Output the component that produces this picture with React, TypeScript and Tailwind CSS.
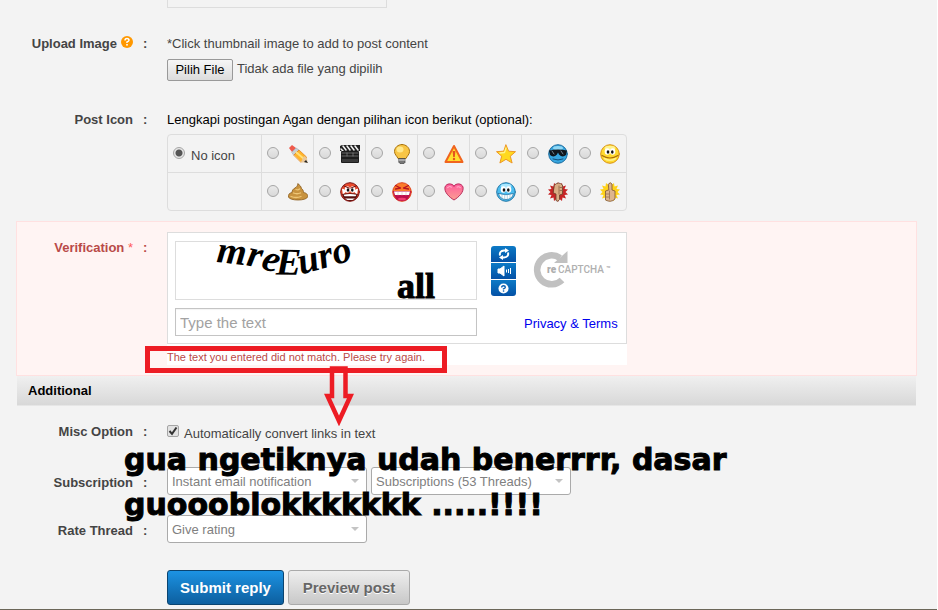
import { useRef, type ReactNode } from "react";

const outline = { strokeLinejoin: "round" as const, strokeLinecap: "round" as const };

function Svg({ children }: { children: ReactNode }) {
  return (
    <svg viewBox="0 0 20 20" className="size-5" aria-hidden="true" {...outline}>
      {children}
    </svg>
  );
}

const Pencil = () => (
  <Svg>
    <path d="M1 4 4 1 8 4 4 8Z" fill="#ef5a4c" />
    <path d="M4 8 8 4 11 6 6 11Z" fill="#c9ced3" stroke="#8d949b" strokeWidth=".5" />
    <path d="M6 11 11 6 18.500 13 18 17 13 18Z" fill="#ffb52b" stroke="#e07c12" strokeWidth=".7" />
    <path d="M8.500 8.500 16 15" stroke="#ffe07a" strokeWidth="2" />
    <path d="M13 18 16 12 19 14 19.500 19Z" fill="#e8c79a" />
    <path d="M16 18 18 16 20 19Z" fill="#222" />
  </Svg>
);
const Clapper = () => (
  <Svg>
    <path d="M0 2 2 1H20V7H0Z" fill="#222" />
    <path d="M3 2 6 6M7 2 10 6M11 2 14 6M15 2 18 6M1 5 3 7" stroke="#f2f2f2" strokeWidth="1.500" />
    <rect x="1" y="7" width="18" height="12" rx="1" fill="#1d1d1d" />
    <path d="M2 9H18M2 12H18M7 9V12M13 9V12" stroke="#999" strokeWidth=".6" />
    <path d="M2 15H18V18H2Z" fill="#3a3a3a" />
  </Svg>
);
const Bulb = () => (
  <Svg>
    <path d="M10 .5C6 .5 2.500 3.500 2.500 7.500c0 3 2.500 4.500 3.500 7h8c1-2.500 3.500-4 3.500-7C17.500 3.500 14 .5 10 .5Z" fill="#f8c545" stroke="#a9740f" />
    <ellipse cx="8" cy="5.500" rx="3.500" ry="3" fill="#ffe88c" />
    <path d="M7 14.500h6v4l-1 1H8l-1-1Z" fill="#777" stroke="#444" strokeWidth=".7" />
    <path d="M7 16h6" stroke="#ddd" />
  </Svg>
);
const Warning = () => (
  <Svg>
    <path d="M10 2 18.500 18H1.500Z" fill="#ffde2e" stroke="#f0641e" strokeWidth="2" />
    <path d="M8.600 7h2.800l-.6 6H9.200Z" fill="#e5521d" />
    <circle cx="10" cy="15" r="1.200" fill="#e5521d" />
  </Svg>
);
const Star = () => (
  <Svg>
    <path d="m10 1 2.600 6.200 6.900.5-5.200 4.500 1.800 6.800L10 15.300 3.900 19l1.800-6.800L.5 7.700l6.900-.5Z" fill="#ffd91f" stroke="#ed9726" />
    <path d="m10 4-1.500 4.500L4 9" stroke="#fff38c" strokeWidth="1.300" fill="none" />
  </Svg>
);
const Eyes = () => (
  <>
    <ellipse cx="7.300" cy="7.500" rx="2.600" ry="3.300" fill="#fff" />
    <ellipse cx="12.700" cy="7.500" rx="2.600" ry="3.300" fill="#fff" />
    <ellipse cx="8" cy="8" rx="1.300" ry="1.700" fill="#111" />
    <ellipse cx="12.300" cy="8" rx="1.300" ry="1.700" fill="#111" />
  </>
);
const Cool = () => (
  <Svg>
    <circle cx="10" cy="10" r="9.300" fill="#37a6df" stroke="#1b6a9d" />
    <ellipse cx="10" cy="4" rx="5" ry="2" fill="#8ed8f6" />
    <path d="M1 6.500Q10 4.500 19 6.500L18 11Q14.500 14 11 10.500L10 8.500 9 10.500Q5.500 14 2 11Z" fill="#10161c" />
    <path d="m4 7 2 3M13 7l2 3" stroke="#718390" />
    <path d="M5 15Q10 17 15 15" stroke="#134d78" fill="none" />
  </Svg>
);
const Smile = () => (
  <Svg>
    <circle cx="10" cy="10" r="9.300" fill="#ffd92e" stroke="#d99216" />
    <ellipse cx="10" cy="4" rx="5.500" ry="2.300" fill="#fff38f" />
    <Eyes />
    <path d="M2 11.500Q10 16.500 18 11.500" fill="none" stroke="#a96c0c" strokeWidth="1.200" />
    <path d="M4.500 14.500Q10 18 15.500 14.500" fill="none" stroke="#fff08a" strokeWidth="1.500" />
  </Svg>
);
const Poop = () => (
  <Svg>
    <path d="M10 2c2 1 3 2.500 3.500 4.500 1.500 1 2 2.500 2 4C19 11 20 13 19.500 15c-1 4-18 4-19 0-.5-2 .5-4 3.500-4.500 0-2 1-3.500 3-4.500C8.500 5 9.500 4 10 2Z" fill="#c8933f" stroke="#8a5c1c" strokeWidth=".8" />
    <path d="M8 7.500q2 1 3.500-.5M5.500 11q3.500 1.500 7 0M3 14.500q5 2 10 0" stroke="#efc777" strokeWidth="1.300" fill="none" />
  </Svg>
);
const Mad = () => (
  <Svg>
    <circle cx="10" cy="10" r="9.300" fill="#e84a2c" stroke="#7d1010" />
    <path d="M2 7q2-1 4 2.500L3 13ZM18 7q-2-1-4 2.500l3 3.500Z" fill="#fff" />
    <Eyes />
    <path d="m4 4 5 2M16 4l-5 2" stroke="#6b0c0c" />
    <path d="M2 12Q10 10.500 18 12 16 19 10 19 4 19 2 12Z" fill="#56100f" />
    <path d="M3.500 12.800q6.500-1.500 13 0l-1 1.400h-11ZM5 16.500h10l-2.500 1.500h-5Z" fill="#fff" />
  </Svg>
);
const Laugh = () => (
  <Svg>
    <circle cx="10" cy="10" r="9.300" fill="#fb7b29" stroke="#dd421e" />
    <path d="m3.500 3.500 5 2.500-5 1M16.500 3.500l-5 2.500 5 1" stroke="#b71320" strokeWidth="1.300" fill="none" />
    <path d="M1 9h18q-1 10-9 10T1 9Z" fill="#bd0e4d" />
    <path d="M2 9.500h16l-1 3.500H3Z" fill="#fff" />
    <path d="M6 10v3M10 10v3M14 10v3" stroke="#d9b9bf" strokeWidth=".6" />
    <ellipse cx="10" cy="17" rx="4" ry="1.300" fill="#ef3f72" />
  </Svg>
);
const Heart = () => (
  <Svg>
    <defs>
      <linearGradient id="heart" x2="0" y2="1">
        <stop stopColor="#ff5c9d" />
        <stop offset="1" stopColor="#fa9f91" />
      </linearGradient>
    </defs>
    <path d="M10 4C8 1 2.500 1 1 5c-1 5 4 10 9 13C15 15 20 10 19 5c-1.500-4-7-4-9-1Z" fill="url(#heart)" stroke="#b92d5c" />
    <path d="M3.500 5.500q2-2 4-.5M13 5q2-1 3.500.5" stroke="#ffb5cf" fill="none" />
  </Svg>
);
const Grin = () => (
  <Svg>
    <circle cx="10" cy="10" r="9.300" fill="#4bbdf0" stroke="#2376a5" />
    <ellipse cx="10" cy="4" rx="5.500" ry="2.300" fill="#a9e7ff" />
    <Eyes />
    <path d="M2.500 11.500Q10 14 17.500 11.500 16 17.500 10 17.500 4 17.500 2.500 11.500Z" fill="#fff" stroke="#226b99" strokeWidth=".7" />
    <path d="M6 13v3.500M8.700 13v4M11.300 13v4M14 13v3.500" stroke="#7db7d2" strokeWidth=".6" />
  </Svg>
);
const burst =
  "m10 0 1.500 3L14 1l.5 3.500L18 3.500 16.500 7l3.500.5L17.500 10l2.500 2.500-3.500.5 1.500 3.500-3.500-1L14 19l-2.500-2L10 20l-1.500-3L6 19l-.5-3.500-3.500 1L3.500 13 0 12.500 2.500 10 0 7.500 3.500 7 2 3.500l3.500 1L6 1l2.500 2Z";
const ThumbDown = () => (
  <Svg>
    <path d={burst} fill="#c62526" />
    <path d="M6.500 3q4-4 8 0v9l-3 1v4.500q-1.500 3-3.500 1V12L5.500 11Z" fill="#d9ae85" stroke="#6b432c" strokeWidth=".8" />
    <path d="M11 4v8M12 5.500h2.500M12 8.500h2.500" stroke="#8d6245" strokeWidth=".8" />
  </Svg>
);
const ThumbUp = () => (
  <Svg>
    <path d={burst} fill="#ffd21b" />
    <path d="M8.500 2q2-2.500 3.500 0v6l3 1v8q-4 4-9.500 1V9l3-1Z" fill="#ddb58e" stroke="#7c5436" strokeWidth=".8" />
    <path d="M9.500 9v8M6 12h3M6 15h3" stroke="#9a7150" strokeWidth=".8" />
  </Svg>
);

const rows = [
  [
    ["Pencil", Pencil],
    ["Movie", Clapper],
    ["Idea", Bulb],
    ["Warning", Warning],
    ["Star", Star],
    ["Cool", Cool],
    ["Smile", Smile],
  ],
  [
    ["Poop", Poop],
    ["Mad", Mad],
    ["Laugh", Laugh],
    ["Heart", Heart],
    ["Grin", Grin],
    ["Thumbs down", ThumbDown],
    ["Thumbs up", ThumbUp],
  ],
] as const;

const radio =
  "mb-0.5 size-3 shrink-0 appearance-none rounded-full border border-[#a5a5a5] bg-linear-to-b from-[#e9e9e9] to-[#d9d9d9] checked:bg-[radial-gradient(circle,#555_0_3px,#e6e6e6_4px)]";

function Row({ label, htmlFor, className = "items-start", children }: { label: ReactNode; htmlFor?: string; className?: string; children: ReactNode }) {
  return (
    <div className={`flex ${className}`}>
      <label htmlFor={htmlFor} className="w-[117px] shrink-0 text-right font-bold">
        {label}
      </label>
      <span className="w-[34px] shrink-0 pl-2.5 font-bold">:</span>
      <div className="min-w-0 flex-1">{children}</div>
    </div>
  );
}

function Select({ id, label, text }: { id: string; label: string; text: string }) {
  return (
    <div className="relative w-[200px]">
      <select id={id} aria-label={label} className="block h-7 w-full appearance-none rounded-[3px] border border-[#aaa] bg-white px-1 pt-px text-[#808080]">
        <option>{text}</option>
      </select>
      <svg viewBox="0 0 8 4" className="pointer-events-none absolute top-3 right-2 h-1 w-2" aria-hidden="true">
        <path d="M0 0H8L4 4Z" fill="#c4c4c4" />
      </svg>
    </div>
  );
}

const tool = "flex h-4 w-full items-center justify-center bg-linear-to-b from-[#0d7ac6] to-[#0551a6]";

export default function App() {
  const file = useRef<HTMLInputElement>(null);
  return (
    <div className="relative min-h-screen overflow-hidden border-r border-white bg-[#f3f3f3] font-['Liberation_Sans',Arial,sans-serif] text-[13px] leading-5 text-[#444]">
      <form className="mr-5 ml-4" onSubmit={(e) => e.preventDefault()}>
        <div className="ml-[151px] h-2 w-[220px] border border-t-0 border-[#ddd]" />

        <Row
          className="mt-[26px] items-start"
          htmlFor="upload"
          label={
            <span className="flex justify-end gap-1">
              Upload Image
              <svg viewBox="0 0 12 12" className="mt-[2px] size-3" aria-hidden="true">
                <circle cx="6" cy="6" r="6" fill="#ff9800" />
                <path d="M4 4.500Q4 2.500 6 2.500T8 4.300Q8 5.300 6 6V7" fill="none" stroke="#fff" strokeWidth="1.500" />
                <rect x="5.200" y="8" width="1.600" height="1.600" fill="#fff" />
              </svg>
            </span>
          }
        >
          <p>*Click thumbnail image to add to post content</p>
          <div className="mt-[5px] flex gap-1">
            <button
              type="button"
              onClick={() => file.current?.click()}
              className="h-[22px] w-[66px] rounded-[2px] border border-[#999] bg-linear-to-b from-[#f6f6f6] to-[#dcdcdc] text-black"
            >
              Pilih File
            </button>
            <input ref={file} id="upload" type="file" className="hidden" />
            <span>Tidak ada file yang dipilih</span>
          </div>
        </Row>

        <Row className="mt-[29px] items-start" label="Post Icon" htmlFor="icon-none">
          <p className="text-black">Lengkapi postingan Agan dengan pilihan icon berikut (optional):</p>
          <div className="mt-1 w-[460px] divide-y divide-[#ddd] rounded-[4px] border border-[#ddd]">
            {rows.map((row, r) => (
              <div key={r} className="flex divide-x divide-[#ddd]">
                <div className="flex h-[37px] w-[94px] items-center gap-1.5 pl-[5px]">
                  {r === 0 && (
                    <>
                      <input id="icon-none" type="radio" name="icon" defaultChecked className={radio} />
                      <label htmlFor="icon-none" className="pt-1">
                        No icon
                      </label>
                    </>
                  )}
                </div>
                {row.map(([name, Icon]) => (
                  <label key={name} className="flex h-[37px] w-[52px] items-center gap-[9px] pl-[5px]">
                    <input type="radio" name="icon" aria-label={name} className={radio} />
                    <Icon />
                  </label>
                ))}
              </div>
            ))}
          </div>
        </Row>

        <section className="mt-2.5 border border-[#ffe1e1] bg-[#fff4f3] py-2.5">
          <div className="flex items-start">
            <label htmlFor="captcha" className="w-[116px] shrink-0 pt-1.5 text-right font-bold text-[#b94a48]">
              Verification <span className="font-normal text-[#ff5a5a]">*</span>
            </label>
            <span className="w-[34px] shrink-0 pt-1.5 pl-2.5 font-bold text-[#b94a48]">:</span>
            <div className="w-[460px] bg-white">
              <div className="flex h-28 border border-[#ddd] pt-2 pl-[7px]">
                <div className="w-[302px] shrink-0">
                  <div className="h-[59px] border border-[#ddd]">
                    <svg viewBox="0 0 300 57" className="h-[57px] w-[300px] overflow-visible font-['Liberation_Serif',serif] font-bold">
                      <path id="wave" d="M40 20 L68 23 Q82 25 96 30 T130 31 Q150 26 200 11" fill="none" />
                      <text fontSize="38" fontStyle="italic">
                        <textPath href="#wave">mreEuro</textPath>
                      </text>
                      <text x="221" y="56" fontSize="36" stroke="#000" strokeWidth="1">
                        all
                      </text>
                    </svg>
                  </div>
                  <input
                    id="captcha"
                    type="text"
                    placeholder="Type the text"
                    aria-describedby="captcha-error"
                    className="mt-2 h-7 w-full border border-[#c4c4c4] bg-white px-1 text-[15px] inset-shadow-xs placeholder:text-[#a2a2a2]"
                  />
                </div>
                <div className="mt-[5px] ml-[14px] flex h-[50px] w-[25px] shrink-0 flex-col gap-px overflow-hidden rounded-[3px]">
                  <button type="button" aria-label="Get a new challenge" className={tool}>
                    <svg viewBox="0 0 14 12" className="h-3 w-3.5" fill="none" stroke="#fff" strokeWidth="2">
                      <path d="M3 7.500Q2 3 7 2.500H9M11 4.500Q12 9 7 9.500H5" />
                      <path d="M8 0v5L12 2.500ZM6 7v5L2 9.500Z" fill="#fff" stroke="none" />
                    </svg>
                  </button>
                  <button type="button" aria-label="Get an audio challenge" className={tool}>
                    <svg viewBox="0 0 14 12" className="h-3 w-3.5" stroke="#fff">
                      <path d="M1 4h2l4-3v10L3 8H1Z" fill="#fff" />
                      <path d="M9.500 4.500v3M11.500 4v4M13.500 3v6" />
                    </svg>
                  </button>
                  <button type="button" aria-label="Help" className={tool}>
                    <svg viewBox="0 0 12 12" className="size-[11px]">
                      <circle cx="6" cy="6" r="5.500" fill="#fff" />
                      <path d="M4 5Q4 3 6 3T8 4.500Q8 5.500 6 6.300V7" fill="none" stroke="#075fb1" strokeWidth="1.500" />
                      <rect x="5.300" y="8" width="1.500" height="1.500" fill="#075fb1" />
                    </svg>
                  </button>
                </div>
                <div className="ml-2 flex-1">
                  <svg viewBox="0 0 84 48" className="mt-2 ml-2 h-12 w-[84px] font-['Roboto',sans-serif]">
                    <path d="M28 9A14.500 14.500 0 1 0 30 31" fill="none" stroke="#c1c1c1" strokeWidth="6.500" />
                    <path d="M35.500 2V14H22Z" fill="#c1c1c1" />
                    <text x="15" y="24" fontSize="10" fontWeight="900" fill="#adadad" stroke="#fff" strokeWidth="3" paintOrder="stroke">
                      re
                    </text>
                    <text x="26" y="24" fontSize="10" fontWeight="500" fill="#b0b0b0" stroke="#fff" strokeWidth="2" paintOrder="stroke">
                      CAPTCHA
                    </text>
                    <text x="74" y="22" fontSize="7" fontWeight="700" fill="#b0b0b0">
                      ™
                    </text>
                  </svg>
                  <a href="#privacy" className="mt-[17px] block whitespace-nowrap text-[#0000ee]">
                    Privacy &amp; Terms
                  </a>
                </div>
              </div>
              <p id="captcha-error" className="pt-[5px] text-[11px] leading-4 text-[#b94a48]">
                The text you entered did not match. Please try again.
              </p>
            </div>
          </div>
        </section>

        <h2 className="mx-px border-b border-[#e6e6e6] bg-linear-to-b from-[#f0f0f0] to-[#d8d8d8] px-[11px] py-[5px] leading-[19px] font-bold text-black">Additional</h2>

        <Row className="mt-4 items-start" label="Misc Option" htmlFor="links">
          <div className="flex gap-[5px]">
            <span className="relative mt-[3px] size-3">
              <input
                id="links"
                type="checkbox"
                defaultChecked
                className="peer block size-3 appearance-none rounded-[2px] border border-[#a5a5a5] bg-[#e2e2e2]"
              />
              <svg viewBox="0 0 12 12" className="pointer-events-none absolute inset-0 hidden size-3 peer-checked:block" aria-hidden="true">
                <path d="M2.500 6 5 8.800 9.500 2.500" fill="none" stroke="#333" strokeWidth="2" />
              </svg>
            </span>
            <label htmlFor="links" className="pt-0.5">
              Automatically convert links in text
            </label>
          </div>
        </Row>
        <Row className="mt-[23px] items-end leading-6" label="Subscription" htmlFor="sub">
          <div className="flex gap-1">
            <Select id="sub" label="Subscription" text="Instant email notification" />
            <Select id="folder" label="Folder" text="Subscriptions (53 Threads)" />
          </div>
        </Row>
        <Row className="mt-5 items-end leading-6" label="Rate Thread" htmlFor="rate">
          <Select id="rate" label="Rate Thread" text="Give rating" />
        </Row>
        <div className="mt-[27px] ml-[151px] flex gap-1 text-[15px] font-bold">
          <button type="submit" className="h-[35px] w-[117px] rounded-[3px] border border-[#0a4470] bg-linear-to-b from-[#1c93e3] to-[#0d5f9f] text-white">
            Submit reply
          </button>
          <button type="button" className="h-[35px] w-[122px] rounded-[3px] border border-[#aaa] bg-linear-to-b from-[#eee] to-[#c8c8c8] text-[#666] text-shadow-2xs text-shadow-white">
            Preview post
          </button>
        </div>
      </form>

      <div className="pointer-events-none absolute top-[346px] left-[145px] h-[27px] w-[302px] border-5 border-[#ed1c24]" />
      <svg viewBox="0 0 30 60" className="pointer-events-none absolute top-[366px] left-[324px] h-[60px] w-[30px]" aria-hidden="true">
        <path d="M8 2.500H21.500V30H26.500L15 55 3.500 30H8Z" fill="none" stroke="#ed1c24" strokeWidth="4.500" />
      </svg>
      <p className="pointer-events-none absolute top-[437px] left-[124px] font-['DejaVu_Sans',sans-serif] text-[30px] leading-[45px] font-bold whitespace-nowrap text-black [-webkit-text-stroke:1px_black]">
        gua ngetiknya udah benerrrr, dasar
        <br />
        guoooblokkkkkkk .....!!!!
      </p>
      <div className="absolute inset-x-0 bottom-0 h-px bg-[#6b6658]" />
    </div>
  );
}
